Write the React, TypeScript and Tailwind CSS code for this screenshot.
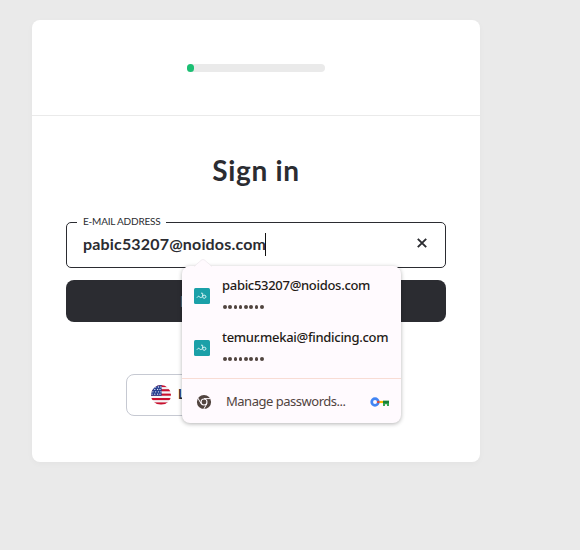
import React from "react";

function StoreIcon() {
  return (
    <svg viewBox="0 0 16 16" className="h-4 w-4 shrink-0">
      <rect width="16" height="16" rx="1.5" fill="#1ba0a8" />
      <path d="M3.2 9.3c.9-1.4 1.7-1.2 2.4-.4.7.8 1.4.8 2.2.2M7.4 5.2c1-.4 1.4 0 1.3 1v2.6c0 2 3.2 1.9 3.2-.1 0-1.7-2-2-3.1-.9" fill="none" stroke="#e9fbfb" strokeWidth="1" strokeLinecap="round" />
    </svg>
  );
}

function ChromeIcon() {
  return (
    <svg viewBox="0 0 16 16" className="h-4 w-4 shrink-0">
      <circle cx="8" cy="8" r="5.3" fill="none" stroke="#51443f" strokeWidth="3.6" />
      <circle cx="8" cy="8" r="2.4" fill="#51443f" />
      <path d="M8 4.6h6.4M5.1 9.7 1.9 4.1M10.9 9.7 7.7 15.2" stroke="#fffafe" strokeWidth="1" />
    </svg>
  );
}

function KeyIcon() {
  return (
    <svg viewBox="0 0 20 10" className="h-[10px] w-5 shrink-0">
      <path d="M8 3.9h5v2.2H8z" fill="#fbbc04" />
      <circle cx="5" cy="5" r="3.3" fill="none" stroke="#4285f4" strokeWidth="2.7" />
      <path d="M7.2 3.9h2v2.2h-2z" fill="#ea4335" />
      <path d="M13 3.8h6V9h-2V7.2h-2V9h-2z" fill="#34a853" />
      <path d="M13 3.8h6v2.4h-6z" fill="#188038" />
    </svg>
  );
}

function FlagIcon() {
  return (
    <svg viewBox="0 0 20 20" className="h-5 w-5 shrink-0">
      <defs>
        <clipPath id="flag">
          <circle cx="10" cy="10" r="10" />
        </clipPath>
      </defs>
      <g clipPath="url(#flag)">
        <rect width="20" height="20" fill="#f5f4f6" />
        {[0, 4.2, 8.6, 13, 17.4].map((y) => (
          <rect key={y} y={y} width="20" height="2.1" fill="#c8102e" />
        ))}
        <rect width="10.6" height="10.8" fill="#263f91" />
        {[2, 4.4, 6.8, 9.2].map((y, i) =>
          [1.6, 4.4, 7.2, 9.6].map((x) => (
            <circle key={`${x}-${y}`} cx={x + (i % 2 ? -0.6 : 0.3)} cy={y} r="0.65" fill="#e8ebf6" />
          ))
        )}
      </g>
    </svg>
  );
}

function Account({ email }: { email: string }) {
  return (
    <div className="flex h-[52px] items-center gap-3 pl-3">
      <StoreIcon />
      <div className="flex flex-col">
        <span className="mb-[3px] h-[19px] whitespace-nowrap text-[13px] font-medium leading-[19px] tracking-[-0.3px] text-[#241a17]">{email}</span>
        <span className="flex h-[18px] items-center gap-[1.8px] pl-px">
          {Array.from({ length: 8 }, (_, i) => (
            <i key={i} className="h-[3.5px] w-[3.5px] rounded-full bg-[#51443f]" />
          ))}
        </span>
      </div>
    </div>
  );
}

function PasswordPopup() {
  return (
    <div className="absolute left-[115px] top-[43px] z-10 h-[157px] w-[219px] rounded-lg bg-[#fffafe] font-['Noto_Sans',sans-serif] shadow-[0_1px_4px_rgba(0,0,0,0.3)]">
      <svg viewBox="0 0 18 8" className="absolute -top-[7px] left-[12px] h-2 w-[18px]">
        <path d="M0 8 7.5 1Q9 0 10.5 1L18 8z" fill="#fffafe" />
        <path d="M0 7.5 7.5 1Q9 0 10.5 1L18 7.5" fill="none" stroke="#ece7eb" strokeWidth=".7" />
      </svg>
      <div className="h-[113px] border-b border-[#f8dcd4] pt-1">
        <Account email="pabic53207@noidos.com" />
        <Account email="temur.mekai@findicing.com" />
      </div>
      <div className="flex h-[45px] items-center pl-[14px] pr-[11px]">
        <ChromeIcon />
        <span className="ml-[14px] flex-1 whitespace-nowrap text-[13px] tracking-[-0.48px] text-[#51443f]">Manage passwords...</span>
        <KeyIcon />
      </div>
    </div>
  );
}

export default function App() {
  return (
    <main className="h-[550px] w-[580px] overflow-hidden bg-[#eaeaea] pl-8 pt-5 font-['Lato',sans-serif] text-[#2b2c31]">
      <section className="h-[442px] w-[448px] rounded-lg bg-white shadow-[0_2px_6px_rgba(0,0,0,0.03)]">
        <header className="flex h-24 items-center justify-center border-b border-[#eaeaea]">
          <div className="h-2 w-[138px] rounded-full bg-[#eaeaea]">
            <div className="h-2 w-[7px] rounded-full bg-[#1bbf73]" />
          </div>
        </header>
        <div className="flex flex-col px-[34px] pt-[36px]">
          <h1 className="h-9 text-center text-[28px] font-bold leading-9 tracking-[0.7px]">Sign in</h1>
          <div className="relative mt-[34px] flex h-[46px] items-center rounded-[5px] border border-[#2b2c31] pl-4 pr-[18px]">
            <label className="absolute -top-[9px] left-[10px] h-4 bg-white px-[6px] text-[10px] leading-[14px] tracking-[-0.2px]">E-MAIL ADDRESS</label>
            <span className="mb-[2px] whitespace-nowrap text-[16px] font-bold leading-6 tracking-[0.17px]">pabic53207@noidos.com</span>
            <i className="-ml-px mb-[2px] h-[23px] w-px bg-[#111]" />
            <svg viewBox="0 0 10 10" className="mb-[4px] ml-auto h-[10px] w-[10px]">
              <path d="m.8.8 8.4 8.4M9.2.8.8 9.2" stroke="#2b2c31" strokeWidth="1.9" />
            </svg>
            <PasswordPopup />
          </div>
          <button className="mt-3 h-[42px] rounded-lg bg-[#2b2c31] pl-[114px] text-left text-[16px] font-bold text-[#77787c]">Next</button>
          <button className="ml-[60px] mt-[52px] flex h-[42px] w-[260px] items-center gap-[7px] rounded-lg border border-[#c6c9d2] pl-6 text-[13px] font-bold">
            <FlagIcon />
            Language
          </button>
        </div>
      </section>
    </main>
  );
}
